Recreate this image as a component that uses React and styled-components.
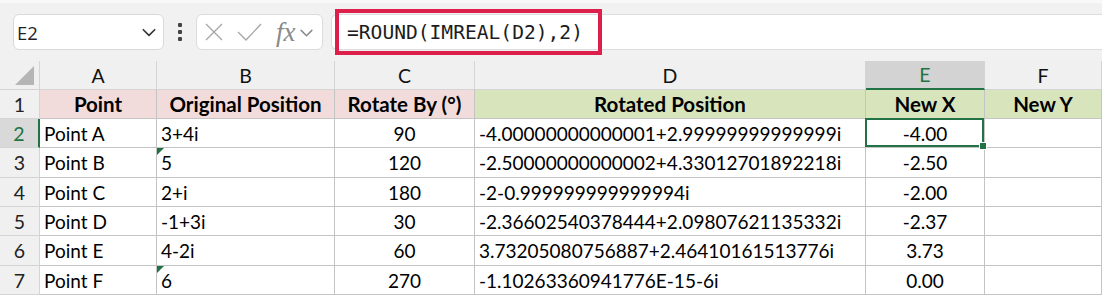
import React from 'react';
import styled, { createGlobalStyle } from 'styled-components';

const GlobalStyle = createGlobalStyle`
  html, body {
    margin: 0;
    padding: 0;
    background: #ffffff;
  }
  body {
    font-family: 'Lato', 'Liberation Sans', sans-serif;
  }
`;

const green = '#217346';
const lineColor = '#c4c4c4';

const Page = styled.div`
  width: 1102px;
  height: 298px;
  overflow: hidden;
  background: #ffffff;
`;

const FormulaBar = styled.div`
  height: 61px;
  box-sizing: border-box;
  background: #f1f1f1;
  border-top: 3px solid #f8f8f8;
  display: flex;
  align-items: center;
  padding-left: 13px;
`;

const NameBox = styled.div`
  width: 151px;
  height: 36px;
  box-sizing: border-box;
  background: #ffffff;
  border: 1px solid #d9d9d9;
  border-radius: 6px;
  display: flex;
  align-items: center;
  justify-content: space-between;
  padding: 0 6px 0 3px;
  font-family: 'Open Sans', sans-serif;
  font-size: 18.5px;
  color: #1f1f1f;
`;

const Dots = styled.div`
  width: 32px;
  display: flex;
  flex-direction: column;
  align-items: center;
  gap: 3px;

  span {
    width: 4px;
    height: 4px;
    border-radius: 1px;
    background: #444;
  }
`;

const FnBox = styled.div`
  width: 127px;
  height: 36px;
  box-sizing: border-box;
  background: #ffffff;
  border: 1px solid #dcdcdc;
  border-radius: 6px;
  display: flex;
  align-items: center;
  padding-left: 8px;
  gap: 14px;
`;

const Fx = styled.span`
  font-family: 'Liberation Serif', serif;
  font-style: italic;
  font-size: 27px;
  line-height: 1;
  color: #8a8a8a;
  display: flex;
  align-items: center;
  gap: 3px;
`;

const FormulaInput = styled.div`
  flex: 1;
  height: 36px;
  margin-left: 8px;
  box-sizing: border-box;
  background: #ffffff;
  border: 1px solid #dcdcdc;
  border-right: none;
  border-radius: 6px 0 0 6px;
  display: flex;
  align-items: center;
  padding-left: 3px;
`;

const Highlight = styled.div`
  width: 267px;
  height: 46px;
  flex-shrink: 0;
  box-sizing: border-box;
  border: 4px solid #dc1f4b;
  display: flex;
  align-items: center;
  padding-left: 8px;
  font-family: 'DejaVu Sans Mono', 'Liberation Mono', monospace;
  font-size: 19.6px;
  color: #1c1c1c;
`;

const Sheet = styled.div`
  display: grid;
  grid-template-columns: 40px 117px 178px 140px 391px 119px 117px;
  grid-template-rows: 29px 29px 29px 30px 29px 29px 30px 29px 29px;
  background: #ffffff;
`;

const Corner = styled.div`
  background: #f0f0f0;
  border-right: 1px solid #d4d4d4;
  border-bottom: 1px solid #d4d4d4;
  display: flex;
  align-items: flex-end;
  justify-content: flex-end;
  padding: 0 5px 4px 0;
`;

const ColHead = styled.div`
  box-sizing: border-box;
  background: ${(p) => (p.$active ? '#d3d3d3' : '#f0f0f0')};
  color: ${(p) => (p.$active ? green : '#111')};
  border-right: 1px solid #d4d4d4;
  border-bottom: ${(p) => (p.$active ? `2px solid ${green}` : '1px solid #d4d4d4')};
  display: flex;
  align-items: center;
  justify-content: center;
  font-size: 19.5px;
`;

const RowHead = styled.div`
  box-sizing: border-box;
  background: ${(p) => (p.$active ? '#d9d9d9' : '#f0f0f0')};
  color: ${(p) => (p.$active ? green : '#222')};
  border-right: ${(p) => (p.$active ? `2px solid ${green}` : '1px solid #d4d4d4')};
  border-bottom: 1px solid #d4d4d4;
  display: flex;
  align-items: center;
  justify-content: center;
  font-size: 19.5px;
`;

const Cell = styled.div`
  position: relative;
  box-sizing: border-box;
  background: ${(p) => p.$bg || '#ffffff'};
  border-right: 1px solid ${lineColor};
  border-bottom: 1px solid ${lineColor};
  display: flex;
  align-items: center;
  justify-content: ${(p) => (p.$center ? 'center' : 'flex-start')};
  padding: 0 4px;
  font-size: ${(p) => (p.$bold ? '20.5px' : '19px')};
  font-weight: ${(p) => (p.$bold ? 700 : 400)};
  color: #000;
  white-space: nowrap;
`;

const Selection = styled.div`
  position: absolute;
  inset: -1px 0 0 -1px;
  border: 2px solid ${green};
  pointer-events: none;
  z-index: 2;
`;

const FillHandle = styled.div`
  position: absolute;
  right: -5px;
  bottom: -5px;
  width: 8px;
  height: 8px;
  background: ${green};
  border: 1px solid #ffffff;
  box-sizing: border-box;
`;

const TextFlag = styled.div`
  position: absolute;
  left: 0;
  top: 0;
  width: 0;
  height: 0;
  border-top: 7px solid #1e7145;
  border-right: 7px solid transparent;
`;

const pink = '#f2dcdb';
const lime = '#d8e4bc';

const columns = ['A', 'B', 'C', 'D', 'E', 'F'];

const headers = [
  { text: 'Point', bg: pink },
  { text: 'Original Position', bg: pink },
  { text: 'Rotate By (°)', bg: pink },
  { text: 'Rotated Position', bg: lime },
  { text: 'New X', bg: lime },
  { text: 'New Y', bg: lime },
];

const rows = [
  ['Point A', '3+4i', '90', '-4.00000000000001+2.99999999999999i', '-4.00', ''],
  ['Point B', '5', '120', '-2.50000000000002+4.33012701892218i', '-2.50', ''],
  ['Point C', '2+i', '180', '-2-0.999999999999994i', '-2.00', ''],
  ['Point D', '-1+3i', '30', '-2.36602540378444+2.09807621135332i', '-2.37', ''],
  ['Point E', '4-2i', '60', '3.73205080756887+2.46410161513776i', '3.73', ''],
  ['Point F', '6', '270', '-1.10263360941776E-15-6i', '0.00', ''],
];

const centered = [false, false, true, false, true, true];
const flagged = ['5', '6'];

const Chevron = ({ size = 14, color = '#333' }) => (
  <svg width={size} height={size} viewBox="0 0 14 14" fill="none">
    <path d="M2 5 L7 10 L12 5" stroke={color} strokeWidth="1.4" strokeLinecap="round" strokeLinejoin="round" />
  </svg>
);

const CrossIcon = () => (
  <svg width="18" height="18" viewBox="0 0 18 18" fill="none">
    <path d="M1 1 L17 17 M17 1 L1 17" stroke="#a6a6a6" strokeWidth="1.3" />
  </svg>
);

const CheckIcon = () => (
  <svg width="25" height="18" viewBox="0 0 25 18" fill="none">
    <path d="M1 9 L9 17 L24 1" stroke="#a6a6a6" strokeWidth="1.3" />
  </svg>
);

const CornerTriangle = () => (
  <svg width="19" height="19" viewBox="0 0 19 19">
    <polygon points="19,0 19,19 0,19" fill="#b5b5b5" />
  </svg>
);

export default function App() {
  return (
    <Page>
      <GlobalStyle />
      <FormulaBar>
        <NameBox>
          <span>E2</span>
          <Chevron size={16} />
        </NameBox>
        <Dots>
          <span />
          <span />
          <span />
        </Dots>
        <FnBox>
          <CrossIcon />
          <CheckIcon />
          <Fx>
            fx
            <Chevron size={15} color="#8a8a8a" />
          </Fx>
        </FnBox>
        <FormulaInput>
          <Highlight>=ROUND(IMREAL(D2),2)</Highlight>
        </FormulaInput>
      </FormulaBar>

      <Sheet>
        <Corner>
          <CornerTriangle />
        </Corner>
        {columns.map((c) => (
          <ColHead key={c} $active={c === 'E'}>
            {c}
          </ColHead>
        ))}

        <RowHead>1</RowHead>
        {headers.map((h) => (
          <Cell key={h.text} $bg={h.bg} $bold $center>
            {h.text}
          </Cell>
        ))}

        {rows.map((row, r) => (
          <React.Fragment key={r}>
            <RowHead $active={r === 0}>{r + 2}</RowHead>
            {row.map((value, c) => (
              <Cell key={c} $center={centered[c]}>
                {c === 1 && flagged.includes(value) && <TextFlag />}
                {value}
                {r === 0 && c === 4 && (
                  <Selection>
                    <FillHandle />
                  </Selection>
                )}
              </Cell>
            ))}
          </React.Fragment>
        ))}
      </Sheet>
    </Page>
  );
}
